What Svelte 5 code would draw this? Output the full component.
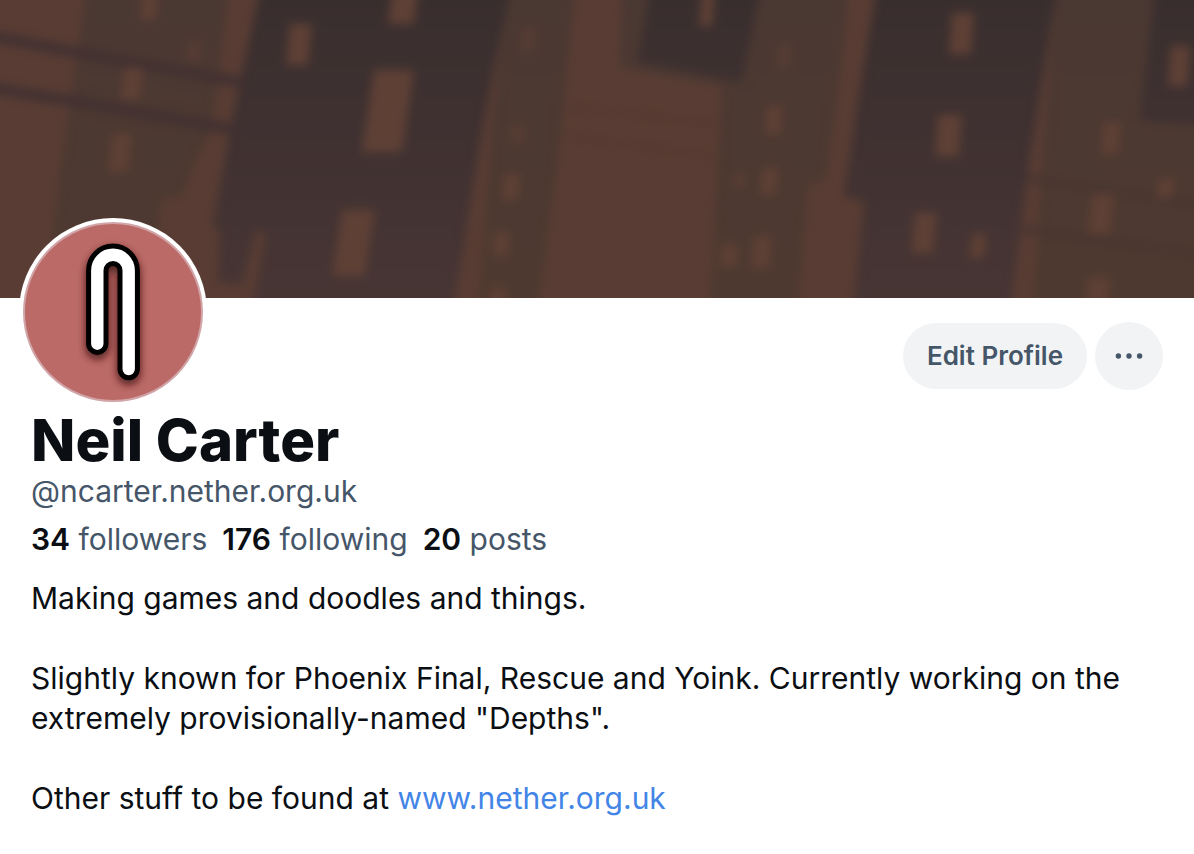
<script lang="ts">
  type Stat = { count: number; label: string };
  type Pane = { x: number; y: number; w: number; h: number; lean: number; faint?: boolean };

  const name = "Neil Carter";
  const handle = "@ncarter.nether.org.uk";

  const stats: Stat[] = [
    { count: 34, label: "followers" },
    { count: 176, label: "following" },
    { count: 20, label: "posts" },
  ];

  // lit windows: top left corner, size and how far the foot leans to the left
  const panes: Pane[] = [
    { x: 142, y: -8, w: 16, h: 28, lean: 2 },
    { x: 188, y: 40, w: 14, h: 22, lean: 2, faint: true },
    { x: 124, y: 68, w: 20, h: 32, lean: 4 },
    { x: 112, y: 134, w: 20, h: 38, lean: 4 },
    { x: 290, y: 24, w: 22, h: 41, lean: 4 },
    { x: 392, y: -10, w: 26, h: 34, lean: 4 },
    { x: 374, y: 70, w: 40, h: 82, lean: 12 },
    { x: 342, y: 210, w: 33, h: 66, lean: 10 },
    { x: 522, y: 28, w: 14, h: 24, lean: 2, faint: true },
    { x: 511, y: 124, w: 16, h: 20, lean: 2, faint: true },
    { x: 504, y: 174, w: 16, h: 26, lean: 2 },
    { x: 494, y: 232, w: 16, h: 24, lean: 2 },
    { x: 490, y: 288, w: 16, h: 20, lean: 2 },
    { x: 702, y: -8, w: 13, h: 34, lean: 3 },
    { x: 778, y: 44, w: 14, h: 24, lean: 2, faint: true },
    { x: 767, y: 106, w: 16, h: 28, lean: 2 },
    { x: 762, y: 168, w: 16, h: 26, lean: 2 },
    { x: 733, y: 172, w: 14, h: 16, lean: 2, faint: true },
    { x: 754, y: 236, w: 18, h: 32, lean: 3 },
    { x: 722, y: 244, w: 16, h: 22, lean: 2 },
    { x: 952, y: 13, w: 22, h: 41, lean: 3 },
    { x: 938, y: 115, w: 24, h: 41, lean: 3 },
    { x: 915, y: 213, w: 22, h: 40, lean: 4 },
    { x: 972, y: 234, w: 15, h: 24, lean: 3 },
    { x: 1171, y: 46, w: 19, h: 40, lean: 3 },
    { x: 1104, y: 122, w: 17, h: 32, lean: 3 },
    { x: 1159, y: 178, w: 16, h: 20, lean: 3 },
    { x: 1092, y: 194, w: 22, h: 40, lean: 4 },
    { x: 1088, y: 278, w: 22, h: 26, lean: 2 },
  ];

  function paneShape({ x, y, w, h, lean }: Pane): string {
    return `${x},${y} ${x + w},${y} ${x + w - lean},${y + h} ${x - lean},${y + h}`;
  }
</script>

<main class="profile">
  <svg class="banner" viewBox="0 0 1194 298" preserveAspectRatio="xMidYMid slice" aria-hidden="true">
    <defs>
      <filter id="soft" filterUnits="userSpaceOnUse" x="-40" y="-40" width="1280" height="380" color-interpolation-filters="sRGB">
        <feGaussianBlur stdDeviation="5" />
      </filter>
      <linearGradient id="tower" gradientUnits="userSpaceOnUse" x1="0" y1="0" x2="0" y2="298">
        <stop offset="0" stop-color="#392e2e" />
        <stop offset="1" stop-color="#473534" />
      </linearGradient>
      <linearGradient id="block" gradientUnits="userSpaceOnUse" x1="0" y1="0" x2="0" y2="298">
        <stop offset="0" stop-color="#4a3832" />
        <stop offset="1" stop-color="#4e3930" />
      </linearGradient>
    </defs>

    <rect width="1194" height="298" fill="#593d34" />
    <g filter="url(#soft)">
      <g fill="url(#block)">
        <polygon points="88,-20 230,-20 212,130 196,160 182,196 160,200 156,340 42,340 60,170" />
        <polygon points="508,-20 576,-20 558,160 534,340 476,340 492,130" />
        <polygon points="622,-20 850,-20 842,60 826,180 808,184 796,340 708,340 722,86 620,68" />
        <polygon points="1056,-20 1240,-20 1240,340 1030,340 1042,170" />
      </g>

      <g fill="url(#tower)">
        <polygon points="262,-20 512,-20 484,120 448,340 244,340 264,232 236,230 212,228 232,120" />
        <polygon points="220,224 256,226 242,284 218,282" />
        <polygon points="652,-20 762,-20 742,82 638,62" />
        <polygon points="878,-20 1058,-20 1028,170 1006,340 850,340 864,202 844,196 858,100" />
        <polygon points="1156,-20 1240,-20 1240,130 1140,120" />
      </g>
      <path d="M262 232L248 310" fill="none" stroke="#573c33" stroke-width="10" />

      <g fill="none" stroke="#423131" stroke-width="11">
        <path d="M-20 34L84 54L240 82" />
        <path d="M-20 86L84 103L232 129" />
      </g>
      <g fill="none" stroke="#483530" stroke-width="7">
        <path d="M1026 178L1210 206" />
        <path d="M1016 228L1210 256" />
      </g>
      <g fill="none" stroke="#553a31" stroke-width="6">
        <path d="M560 136L716 156" />
        <path d="M566 106L716 124" />
      </g>

      {#each panes as pane (`${pane.x}-${pane.y}`)}
        <polygon points={paneShape(pane)} fill="#5e4035" opacity={pane.faint ? 0.6 : 1} />
      {/each}
    </g>
  </svg>

  <section class="details">
    <div class="avatar">
      <svg viewBox="0 0 188 188" role="img" aria-label="Avatar of {name}">
        <defs>
          <filter id="shade" filterUnits="userSpaceOnUse" x="0" y="0" width="188" height="188">
            <feDropShadow dx="0" dy="4" stdDeviation="4" flood-color="#30100f" flood-opacity="0.85" />
          </filter>
        </defs>
        <circle cx="94" cy="94" r="94" fill="#fff" />
        <circle cx="94" cy="94" r="89" fill="#bc6a67" stroke="#d1a5a8" stroke-width="2" />
        <g fill="none" stroke-linecap="round">
          <path
            d="M78.3 125.7V52.4a15.7 15.7 0 0 1 31.4 0V151"
            stroke="#000"
            stroke-width="22.4"
            filter="url(#shade)"
          />
          <path d="M78.3 125.7V52.4a15.7 15.7 0 0 1 31.4 0V151" stroke="#fff" stroke-width="12.4" />
        </g>
      </svg>
    </div>

    <div class="actions">
      <button class="edit" type="button">Edit Profile</button>
      <button class="more" type="button" aria-label="More options">
        <svg viewBox="0 0 28 28" aria-hidden="true">
          <circle cx="3.4" cy="14" r="2.7" />
          <circle cx="14" cy="14" r="2.7" />
          <circle cx="24.6" cy="14" r="2.7" />
        </svg>
      </button>
    </div>

    <h1>{name}</h1>
    <p class="handle">{handle}</p>

    <ul class="stats">
      {#each stats as stat (stat.label)}
        <li><strong>{stat.count}</strong> {stat.label}</li>
      {/each}
    </ul>

    <div class="bio">
      <p>Making games and doodles and things.</p>
      <p>
        Slightly known for Phoenix Final, Rescue and Yoink. Currently working on the extremely
        provisionally-named "Depths".
      </p>
      <p>Other stuff to be found at <a href="https://www.nether.org.uk">www.nether.org.uk</a></p>
    </div>
  </section>
</main>

<style>
  :global(body) {
    background: #fff;
  }

  .profile {
    font-family: Inter, "Liberation Sans", sans-serif;
    font-size: 30px;
    line-height: 40px;
    color: #0b0f14;
  }

  .banner {
    display: block;
    width: 100%;
    aspect-ratio: 1194 / 298;
  }

  .details {
    position: relative;
    padding: 24px 31px 34px;
  }

  .avatar {
    position: absolute;
    top: -80px;
    left: 19px;
    width: 188px;
    height: 188px;
  }

  .avatar svg {
    display: block;
  }

  .actions {
    display: flex;
    justify-content: flex-end;
    align-items: center;
    gap: 8px;
  }

  button {
    border: 0;
    border-radius: 34px;
    background: #f1f3f5;
    color: #465669;
    font: inherit;
    cursor: pointer;
  }

  .edit {
    height: 66px;
    padding: 0 24px;
    font-size: 26px;
    font-weight: 600;
  }

  .more {
    display: grid;
    place-items: center;
    width: 68px;
    height: 68px;
    padding: 0;
  }

  .more svg {
    width: 28px;
    height: 28px;
    fill: currentColor;
  }

  h1,
  p,
  ul {
    margin: 0;
  }

  h1 {
    margin-top: 17px;
    font-size: 58px;
    font-weight: 800;
    line-height: 66px;
  }

  .handle {
    line-height: 36px;
    color: #465669;
  }

  .stats {
    display: flex;
    flex-wrap: wrap;
    gap: 0 15px;
    margin-top: 10px;
    padding: 0;
    list-style: none;
    color: #465669;
  }

  .stats strong {
    font-weight: 600;
    color: #0b0f14;
  }

  .bio {
    display: grid;
    gap: 40px;
    margin-top: 19px;
  }

  a {
    color: #4385e6;
    text-decoration: none;
  }
</style>
